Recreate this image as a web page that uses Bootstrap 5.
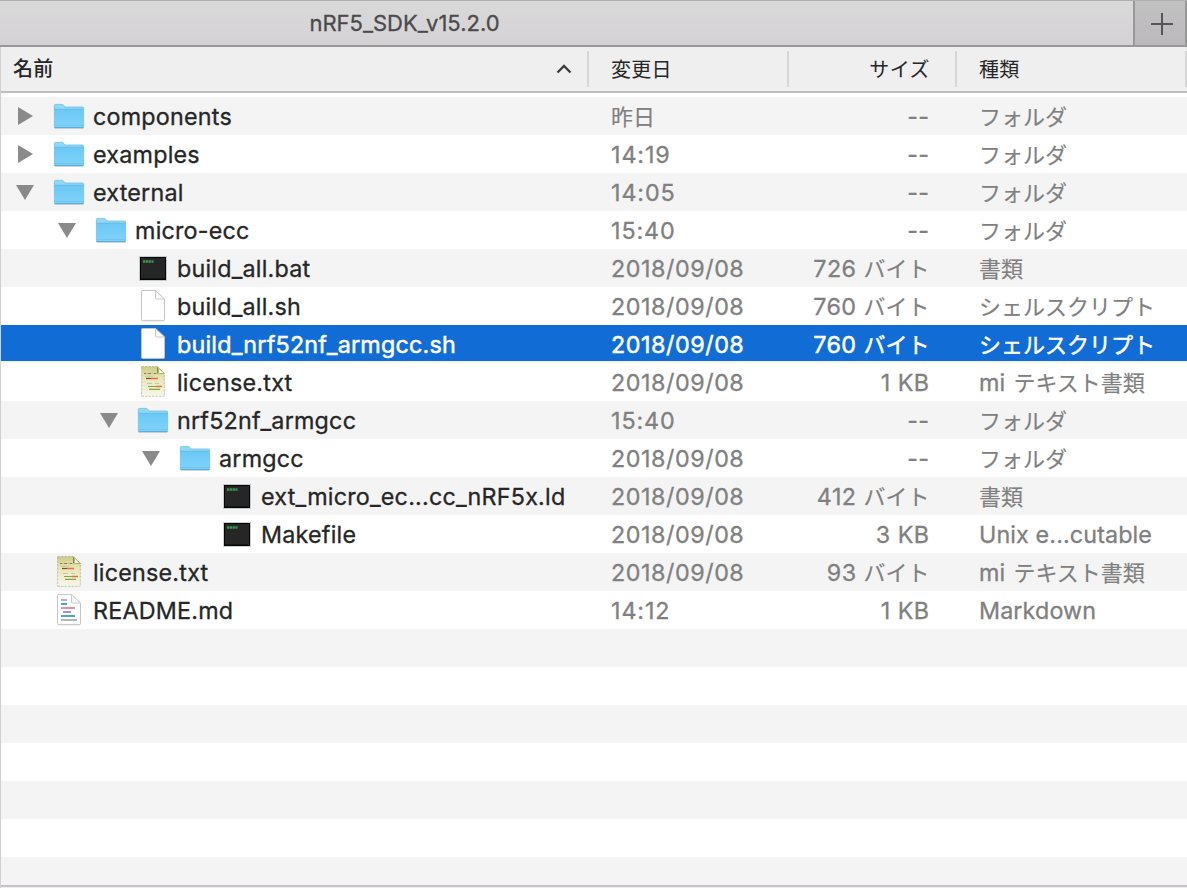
<!DOCTYPE html>
<html lang="ja">
<head>
<meta charset="utf-8">
<meta name="viewport" content="width=device-width, initial-scale=1">
<title>nRF5_SDK_v15.2.0</title>
<link rel="stylesheet" href="https://cdn.jsdelivr.net/npm/bootstrap@5.3.0/dist/css/bootstrap.min.css">
<style>
body{font-family:Inter,"Noto Sans CJK JP",sans-serif;font-size:23.3px;color:#262626;background:#fff;height:888px;overflow:hidden;-webkit-text-stroke:.3px currentColor}
.tabbar{height:47px;border-top:1px solid #b0aeb0;border-bottom:2px solid #989898;background:linear-gradient(#dad9da,#d4d2d4)}
.tab-title{width:809px;font-size:22px;line-height:44px;color:#4b4a4b}
.tab-add{width:54px;border-left:2px solid #989898;border-right:2px solid #989898;background:linear-gradient(#c2c1c2,#bbb9bb)}
.pane{height:841px;border-left:1px solid #d0d0d0}
.heads{height:46px;border-bottom:2px solid #bfbfbf;background:#efefef;font-size:20px;line-height:44px;-webkit-text-stroke:0}
.heads>div{height:36px;line-height:38px;border-right:2px solid #d6d6d6}
.heads .c-name{padding:0 15px 0 12px}
.c-name{width:588px;flex:none;letter-spacing:.22px}
.c-date{width:200px;flex:none;padding-left:22px;letter-spacing:.55px}
.clock{letter-spacing:.9px}
.c-size{width:168px;flex:none;padding-right:27.500px;text-align:right;letter-spacing:.45px}
.c-kind{width:230px;flex:none;padding-left:22px;letter-spacing:.12px}
.heads .c-date,.heads .c-kind{letter-spacing:.2px}
.heads .c-size{padding-right:25px}
.rows{padding-top:4px;height:792px;overflow:hidden}
.item{height:38px;line-height:40px;white-space:nowrap;color:#808080}
.item:nth-child(odd){background:#f4f4f4}
.item .c-name{color:#262626;padding-left:15px}
.item.chosen,.item.chosen .c-name{color:#fff}
.item.chosen{background:#116cd6;border-bottom:2px solid #f4f4f4;-webkit-text-stroke:.5px #fff}
.lv1{margin-left:42px}.lv2{margin-left:84px}.lv3{margin-left:126px}.lv4{margin-left:168px}
.arrow{width:18px;height:38px;margin-right:19px;flex:none}
.ico{width:32px;height:38px;margin-right:8px;flex:none}
.jp{font-family:"Noto Sans CJK JP",sans-serif;font-size:22px;line-height:0;letter-spacing:0;-webkit-text-stroke:.15px currentColor}
.chosen .jp{-webkit-text-stroke:.5px #fff}
.mi-text{word-spacing:1.500px}
.foot{height:3px;border-top:2px solid #c4c4c4;background:#efedef}
</style>
</head>
<body>
<svg width="0" height="0" class="position-absolute" aria-hidden="true">
<defs>
<linearGradient id="gf" x1="0" y1="0" x2="0" y2="1"><stop offset="0" stop-color="#6bc8f5"/><stop offset="1" stop-color="#80d3fa"/></linearGradient>
<linearGradient id="gm" x1="0" y1="0" x2="0" y2="1"><stop offset="0" stop-color="#cccb84"/><stop offset=".4" stop-color="#e6e6b8"/><stop offset="1" stop-color="#f8f8ea"/></linearGradient>
</defs>
<symbol id="right" viewBox="0 0 18 38"><path d="M2 10v18l15-9z" fill="#8a8a8a"/></symbol>
<symbol id="down" viewBox="0 0 18 38"><path d="M0 12h18L9 27z" fill="#8a8a8a"/></symbol>
<symbol id="folder" viewBox="0 0 32 38"><path d="M1.500 31.500h29" stroke="#000" stroke-opacity=".14"/><path d="M1.400 30V8.400q0-1 1-1H9q1 0 1.600.8L12 10h17.600q1 0 1 1v19q0 .7-.7.7H2.100q-.7 0-.7-.7z" fill="#8ed8f8" stroke="#6fbfe6" stroke-width=".8"/><path d="M1.500 12.500H30.500V30q0 .6-.6.6H2.100q-.6 0-.6-.6z" fill="url(#gf)"/><path d="M1.500 12.300H30.500" stroke="#5db5df" stroke-width=".8"/><path d="M1.500 28.500H30.500" stroke="#66bbe4" stroke-width=".6"/><path d="M1.500 30.500H30.500" stroke="#56abd3" stroke-width=".9"/></symbol>
<symbol id="exec" viewBox="0 0 32 38"><path d="M2 7h28v25H2z" fill="#a9b7bf" opacity=".65"/><path d="M3 8h26v23H3z" fill="#050505"/><path d="M4 9h24v20.500H4z" fill="#262626"/><path d="M6 12.500h10.500" stroke="#3fb857" stroke-width="2.600" stroke-dasharray="2.300 .5" opacity=".8"/></symbol>
<symbol id="page" viewBox="0 0 32 38"><path d="M4.500 33.800h23" stroke="#000" stroke-opacity=".2"/><path d="M5 3.500h13.500L27.500 12v20.500q0 .9-.9.900H5.400q-.9 0-.9-.9V4.400q0-.9.900-.9z" fill="#fff" stroke="#c5c5c5"/><path d="M18.500 3.500V11q0 1 1 1h8z" fill="#fafafa" stroke="#c5c5c5" stroke-width=".9"/></symbol>
<symbol id="mi" viewBox="0 0 32 38"><path d="M4.500 3.500h16L27.500 10v23H4.500z" fill="url(#gm)"/><path d="M4.500 3.500h16M4.500 33.300h23M27.300 12v21M4.600 4v29" fill="none" stroke="#a5a58c" stroke-dasharray="2.500 1" stroke-width=".6"/><path d="M20.500 4l7 6.500h-7z" fill="#fbfbe8" stroke="#85853f" stroke-width=".6"/><path d="M20 4v7h1.600V6z" fill="#8a8a3c"/><path d="M7 10.500h16M10 20.500h5m3 0h4" stroke="#c1bc96" stroke-width=".8"/><path d="M7 10.500h2m2 0h3m3 0h2" stroke="#72703b" stroke-width=".8"/><path d="M8 13.200h8" stroke="#c9b391" stroke-width=".7"/><path d="M9 15.500h5" stroke="#7c4a2b" stroke-width="1.200"/><path d="M14 15.500h7M19 23.500h6" stroke="#f16a41" stroke-width="1.300"/><path d="M11 23.500h8M12 26.300h11" stroke="#86a244" stroke-width="1.200"/></symbol>
<symbol id="md" viewBox="0 0 32 38"><use href="#page"/><g stroke-width="2"><path d="M8 9h6M8 29h16" stroke="#b5b5b5"/><path d="M8 13h6M8 25h14" stroke="#4ba9b8"/><path d="M8 17h14" stroke="#dd959c"/><path d="M10 21h8" stroke="#a58bf5"/></g></symbol>
</svg>
<header class="tabbar d-flex">
  <div class="tab-title text-center flex-shrink-0">nRF5_SDK_v15.2.0</div>
  <div class="tab-add ms-auto d-flex"><svg width="50" height="44" viewBox="0 0 50 44"><path d="M16 23h22M27 12v22" stroke="#555" stroke-width="2"/></svg></div>
</header>
<main class="pane">
  <div class="heads d-flex align-items-center">
    <div class="c-name d-flex align-items-center justify-content-between fw-medium"><span>名前</span><svg width="16" height="10" viewBox="0 0 16 10"><path d="M1.500 8.500L8 2l6.500 6.500" fill="none" stroke="#3c3c3c" stroke-width="2.300"/></svg></div>
    <div class="c-date">変更日</div><div class="c-size">サイズ</div><div class="c-kind">種類</div>
  </div>
  <div class="rows">
    <div class="item d-flex"><div class="c-name d-flex"><svg class="arrow"><use href="#right"/></svg><svg class="ico"><use href="#folder"/></svg><span>components</span></div><div class="c-date"><span class="jp">昨日</span></div><div class="c-size">--</div><div class="c-kind"><span class="jp">フォルダ</span></div></div>
    <div class="item d-flex"><div class="c-name d-flex"><svg class="arrow"><use href="#right"/></svg><svg class="ico"><use href="#folder"/></svg><span>examples</span></div><div class="c-date clock">14:19</div><div class="c-size">--</div><div class="c-kind"><span class="jp">フォルダ</span></div></div>
    <div class="item d-flex"><div class="c-name d-flex"><svg class="arrow"><use href="#down"/></svg><svg class="ico"><use href="#folder"/></svg><span>external</span></div><div class="c-date clock">14:05</div><div class="c-size">--</div><div class="c-kind"><span class="jp">フォルダ</span></div></div>
    <div class="item d-flex"><div class="c-name d-flex"><svg class="arrow lv1"><use href="#down"/></svg><svg class="ico"><use href="#folder"/></svg><span>micro-ecc</span></div><div class="c-date clock">15:40</div><div class="c-size">--</div><div class="c-kind"><span class="jp">フォルダ</span></div></div>
    <div class="item d-flex"><div class="c-name d-flex"><span class="arrow lv2"></span><svg class="ico"><use href="#exec"/></svg><span>build_all.bat</span></div><div class="c-date">2018/09/08</div><div class="c-size">726 <span class="jp">バイト</span></div><div class="c-kind"><span class="jp">書類</span></div></div>
    <div class="item d-flex"><div class="c-name d-flex"><span class="arrow lv2"></span><svg class="ico"><use href="#page"/></svg><span>build_all.sh</span></div><div class="c-date">2018/09/08</div><div class="c-size">760 <span class="jp">バイト</span></div><div class="c-kind"><span class="jp">シェルスクリプト</span></div></div>
    <div class="item chosen d-flex"><div class="c-name d-flex"><span class="arrow lv2"></span><svg class="ico"><use href="#page"/></svg><span>build_nrf52nf_armgcc.sh</span></div><div class="c-date">2018/09/08</div><div class="c-size">760 <span class="jp">バイト</span></div><div class="c-kind"><span class="jp">シェルスクリプト</span></div></div>
    <div class="item d-flex"><div class="c-name d-flex"><span class="arrow lv2"></span><svg class="ico"><use href="#mi"/></svg><span>license.txt</span></div><div class="c-date">2018/09/08</div><div class="c-size">1 KB</div><div class="c-kind mi-text">mi <span class="jp">テキスト書類</span></div></div>
    <div class="item d-flex"><div class="c-name d-flex"><svg class="arrow lv2"><use href="#down"/></svg><svg class="ico"><use href="#folder"/></svg><span>nrf52nf_armgcc</span></div><div class="c-date clock">15:40</div><div class="c-size">--</div><div class="c-kind"><span class="jp">フォルダ</span></div></div>
    <div class="item d-flex"><div class="c-name d-flex"><svg class="arrow lv3"><use href="#down"/></svg><svg class="ico"><use href="#folder"/></svg><span>armgcc</span></div><div class="c-date">2018/09/08</div><div class="c-size">--</div><div class="c-kind"><span class="jp">フォルダ</span></div></div>
    <div class="item d-flex"><div class="c-name d-flex"><span class="arrow lv4"></span><svg class="ico"><use href="#exec"/></svg><span>ext_micro_ec...cc_nRF5x.ld</span></div><div class="c-date">2018/09/08</div><div class="c-size">412 <span class="jp">バイト</span></div><div class="c-kind"><span class="jp">書類</span></div></div>
    <div class="item d-flex"><div class="c-name d-flex"><span class="arrow lv4"></span><svg class="ico"><use href="#exec"/></svg><span>Makefile</span></div><div class="c-date">2018/09/08</div><div class="c-size">3 KB</div><div class="c-kind">Unix e...cutable</div></div>
    <div class="item d-flex"><div class="c-name d-flex"><span class="arrow"></span><svg class="ico"><use href="#mi"/></svg><span>license.txt</span></div><div class="c-date">2018/09/08</div><div class="c-size">93 <span class="jp">バイト</span></div><div class="c-kind mi-text">mi <span class="jp">テキスト書類</span></div></div>
    <div class="item d-flex"><div class="c-name d-flex"><span class="arrow"></span><svg class="ico"><use href="#md"/></svg><span>README.md</span></div><div class="c-date clock">14:12</div><div class="c-size">1 KB</div><div class="c-kind">Markdown</div></div>
    <div class="item"></div><div class="item"></div><div class="item"></div><div class="item"></div><div class="item"></div><div class="item"></div><div class="item"></div>
  </div>
  <div class="foot"></div>
</main>
<script src="https://cdn.jsdelivr.net/npm/bootstrap@5.3.0/dist/js/bootstrap.bundle.min.js"></script>
</body>
</html>
